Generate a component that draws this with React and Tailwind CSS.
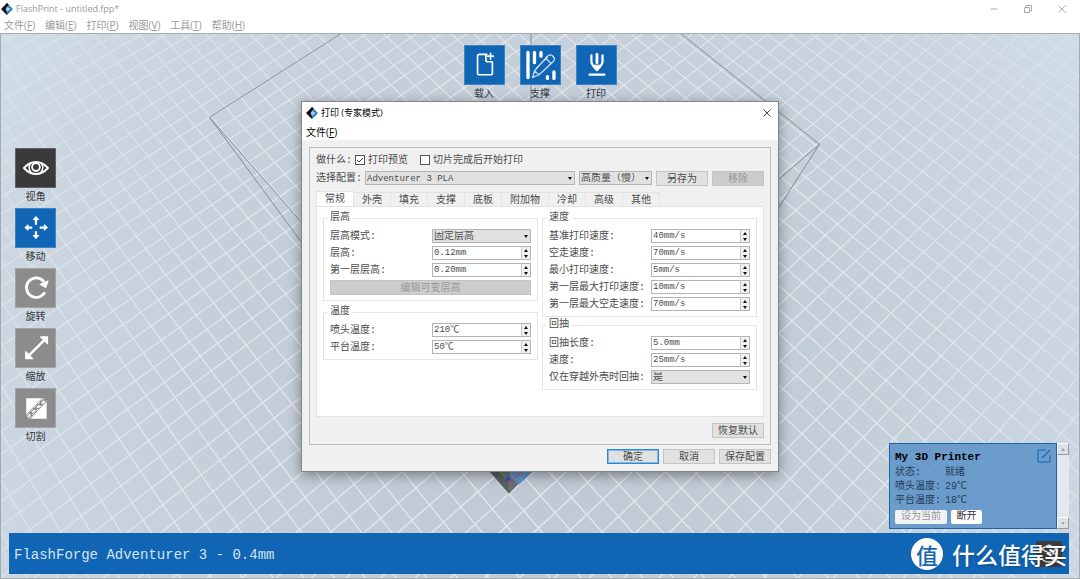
import { useState } from 'react'

// vanishing points of the two floor directions, seen from the current camera
const VP_A = { x: -1093, y: -1380 }
const VP_B = { x: 2653, y: -1433 }
const ORIGIN = { x: 509, y: 494 }
const STEP_A = 22 / 2433
const STEP_B = 22 / 2818

const SANS = "font-['Open_Sans','Noto_Sans_CJK_SC',sans-serif]"
const CJK = "font-['Liberation_Mono','Noto_Sans_CJK_SC',monospace]"

function gridLines(along, across, step, from, to) {
  const lines = []
  for (let i = from; i <= to; i++) {
    const w = 1 + i * step
    if (w <= 0.02) continue
    const px = (ORIGIN.x + i * step * across.x) / w
    const py = (ORIGIN.y + i * step * across.y) / w
    lines.push({
      x1: along.x,
      y1: along.y,
      x2: along.x + (px - along.x) * 4,
      y2: along.y + (py - along.y) * 4,
    })
  }
  return lines
}

const FLOOR = [
  ...gridLines(VP_A, VP_B, STEP_B, -40, 90),
  ...gridLines(VP_B, VP_A, STEP_A, -40, 90),
]

function Scene() {
  return (
    <svg
      className="absolute inset-0 h-full w-full"
      viewBox="0 33 1080 546"
      preserveAspectRatio="xMidYMid slice"
      aria-hidden="true"
    >
      <defs>
        <radialGradient id="floor" gradientUnits="userSpaceOnUse" cx="540" cy="400" r="680">
          <stop offset="0" stopColor="#bfc7d2" />
          <stop offset="0.45" stopColor="#c4ced8" />
          <stop offset="0.8" stopColor="#ccd6e0" />
          <stop offset="1" stopColor="#d0dfe8" />
        </radialGradient>
        <radialGradient id="fade" gradientUnits="userSpaceOnUse" cx="540" cy="480" r="760">
          <stop offset="0" stopColor="#fff" />
          <stop offset="0.5" stopColor="#ddd" />
          <stop offset="1" stopColor="#333" />
        </radialGradient>
        <mask id="fog" maskUnits="userSpaceOnUse" x="0" y="33" width="1080" height="546">
          <rect x="0" y="33" width="1080" height="546" fill="url(#fade)" />
        </mask>
      </defs>
      <rect x="0" y="33" width="1080" height="546" fill="url(#floor)" />
      <g mask="url(#fog)" stroke="#eceff3" strokeWidth="1.2" opacity="0.9">
        {FLOOR.map((l, i) => (
          <line key={i} {...l} />
        ))}
      </g>
      <path d="M470 450 L509 494 L552 450 Z" fill="#6a6f74" />
      <path d="M510 450 H556 L519 485 L510 477 Z" fill="#5f92c8" />
      <path d="M490 472 L509 494 L508 482 L499 472 Z" fill="#5a5f63" />
      <path d="M500 472 L507 479" stroke="#2fc02f" />
      <path d="M522 472 L509 483" stroke="#e03c50" />
      <path d="M506 477 l4 4 m0 -4 l-4 4" stroke="#2f4be0" strokeWidth="1.5" />
      <g stroke="#858c95" strokeWidth="1" fill="none">
        <path d="M341 33 L209 117 L485 432 L820 144 L681 33" />
        <path d="M209 117 L395 370 M820 144 L690 346" />
        <path d="M531 33 V110" />
      </g>
    </svg>
  )
}

function Logo() {
  return (
    <svg viewBox="0 0 12 12" className="size-3 shrink-0" aria-hidden="true">
      <path d="M6 0 L0 6 L6 12 L7 10 L4 7 L7 4 Z" fill="#111" />
      <path d="M6 0 L12 6 L6 12 V8 L8 6 L6 4 Z" fill="#2b7fc0" />
      <path d="M6 0 L8 2 L4 6 L6 8 L4 10 L2.5 7 Z" fill="#111" />
      <path d="M8 2.5 L5 5 V7 H7 L5.5 9.5 L9 6.500 V5 H7 Z" fill="#9fd0ee" />
    </svg>
  )
}

const ICONS = {
  load: (
    <g fill="none" stroke="#fff" strokeWidth="1.8" strokeLinejoin="round" strokeLinecap="round">
      <path d="M23 9 H15 a2 2 0 0 0 -2 2 V29 a2 2 0 0 0 2 2 H27 a2 2 0 0 0 2 -2 V18" />
      <path d="M22 9 V15 a2 2 0 0 0 2 2 H29" />
      <path d="M27 8 V14 M24 11 H30" />
    </g>
  ),
  support: (
    <g fill="none" stroke="#fff" strokeLinecap="round" strokeLinejoin="round">
      <path d="M7 7 V34 M14 7 V18 M21 7 V11 M28 33 V35 M35 28 V35" strokeWidth="3.6" />
      <path
        d="M12 34 L14 27 L28 11 q3 -3 6 0 q3 3 0 6 L19 31 Z M14 27 L19 31 M26 13 L32 19 M16 24 L28 12"
        stroke="#cfe0f2"
        strokeWidth="1.4"
      />
    </g>
  ),
  print: (
    <g fill="none" stroke="#fff" strokeWidth="2.4" strokeLinejoin="round" strokeLinecap="round">
      <path d="M15 10 V17 q0 3 6 9 q6 -6 6 -9 V10" />
      <path d="M21 9 V18" strokeWidth="3" />
      <path d="M18 21 L21 25 L24 21 Z" fill="#fff" strokeWidth="1" />
      <path d="M13 31 H29" />
    </g>
  ),
  view: (
    <g fill="none" stroke="#fff" strokeWidth="2">
      <path d="M8 20.5 Q14 14 21 14 Q28 14 34 20.5 Q28 27 21 27 Q14 27 8 20.5 Z" strokeLinejoin="round" />
      <circle cx="21" cy="19.5" r="4.2" />
      <path d="M15 16 Q12 20 15.5 25 M27 16 Q30 20 26.5 25" strokeWidth="1.6" />
      <path d="M18.5 17 a3 3 0 0 1 3 -1.5" strokeWidth="1" />
    </g>
  ),
  move: (
    <g fill="#fff" stroke="#fff" strokeWidth="2.4">
      <path d="M21 17 V11 M21 24 V30 M17 20 H12 M25 20 H31" />
      <path
        d="M21 8 L24 11.5 H18 Z M21 32 L24 28.5 H18 Z M9 20 L12.5 17 V23 Z M33.5 20 L30 17 V23 Z"
        strokeWidth="1"
        strokeLinejoin="round"
      />
    </g>
  ),
  rotate: (
    <g fill="none" stroke="#fff" strokeWidth="3" strokeLinecap="round">
      <path d="M30 26 A10.5 10.5 0 1 1 29 13" />
      <path d="M34 13 L31.5 20 L25.5 16.5 Z" fill="#fff" strokeWidth="1.2" strokeLinejoin="round" />
    </g>
  ),
  scale: (
    <g fill="#fff" stroke="#fff" strokeLinejoin="round">
      <path d="M14 28 L30 12" strokeWidth="2.6" />
      <path d="M26 8.5 H33.5 V16 Z M10 24.5 V32 H17.5 Z" strokeWidth="1.2" />
    </g>
  ),
  cut: (
    <g fill="#fff">
      <path d="M10.500 10 H29 L10.500 28 Z M32.500 13 V32 H15 Z" />
      <path d="M11 31 L33 9" stroke="#8c8c8c" strokeWidth="6" />
      <path d="M11 28 L30 9.500 M13 32 L33 12" stroke="#fff" strokeWidth="1" strokeDasharray="4 1.500" />
      <path d="M12 30 L32 11" stroke="#fff" strokeWidth="1.800" strokeDasharray="4 3" />
    </g>
  ),
}

function Tool({ icon, label, tone }) {
  return (
    <button className="flex w-[41px] flex-col items-center">
      <span className={`block h-10 w-full border border-white/20 ${tone}`}>
        <svg viewBox="0 0 41 41" className="size-full" aria-hidden="true">
          {ICONS[icon]}
        </svg>
      </span>
      <span className="mt-[3px] text-[10px] leading-[14px] text-[#333a40]">{label}</span>
    </button>
  )
}

function Menu({ items, className }) {
  return (
    <nav className={`flex gap-[10px] text-[10px] leading-[16px] ${SANS} ${className}`}>
      {items.map(([name, key]) => (
        <button key={name}>
          {name}(<u>{key}</u>)
        </button>
      ))}
    </nav>
  )
}

function Arrow({ up, color = '#111' }) {
  return (
    <svg viewBox="0 0 4 3" className="h-[3px] w-1" aria-hidden="true">
      <path d={up ? 'M0 3 L2 0 L4 3 Z' : 'M0 0 L4 0 L2 3 Z'} fill={color} />
    </svg>
  )
}

function Select({ id, label, options, className }) {
  return (
    <span className={`relative block ${className}`}>
      <select
        id={id}
        aria-label={label}
        className="block h-[14px] w-full appearance-none border border-[#b4b4b4] bg-[#e1e1e1] pt-px pl-px leading-[12px]"
      >
        {options.map((o) => (
          <option key={o}>{o}</option>
        ))}
      </select>
      <span className="pointer-events-none absolute inset-y-0 right-[3px] flex items-center">
        <Arrow />
      </span>
    </span>
  )
}

function Spin({ id, initial }) {
  const [value, setValue] = useState(initial)
  const bump = (d) =>
    setValue((v) =>
      v.replace(/^[\d.]+/, (n) => {
        const digits = (n.split('.')[1] || '').length
        return (Number(n) + d / 10 ** digits).toFixed(digits)
      }),
    )

  return (
    <span className="flex h-[14px] w-[99px] border border-[#b4b4b4] bg-white">
      <input
        id={id}
        value={value}
        onChange={(e) => setValue(e.target.value)}
        className="min-w-0 flex-1 pt-px pl-px text-[9px] leading-[11px] outline-none"
      />
      <span className="flex w-[9px] flex-col border-l border-[#c8c8c8] bg-[#f0f0f0]">
        <button aria-label="增加" className="flex flex-1 items-center justify-center" onClick={() => bump(1)}>
          <Arrow up />
        </button>
        <button aria-label="减少" className="flex flex-1 items-center justify-center" onClick={() => bump(-1)}>
          <Arrow />
        </button>
      </span>
    </span>
  )
}

function Row({ id, label, children }) {
  return (
    <div className="flex h-[14px] items-center justify-between">
      <label htmlFor={id}>{label}:</label>
      {children}
    </div>
  )
}

function Group({ title, children }) {
  return (
    <fieldset className="border border-[#e4e4e4] px-[6px] pb-[5px]">
      <legend className="-ml-[3px] px-[3px] leading-[12px]">{title}</legend>
      <div className="flex flex-col gap-[3px] pt-[5px]">{children}</div>
    </fieldset>
  )
}

function DialogButton({ children, primary, disabled, className = 'w-[52px]' }) {
  let look = 'border-[#c4c4c4] bg-[#e1e1e1]'
  if (primary) look = 'border-[#2a8ad8] bg-[#e1e1e1] shadow-[inset_0_0_0_1px_#7fb8e6]'
  if (disabled) look = 'border-[#c4c4c4] bg-[#cccccc] text-[#999999]'
  return (
    <button disabled={disabled} className={`h-[15px] shrink-0 border leading-[15px] ${look} ${className}`}>
      {children}
    </button>
  )
}

const SPEEDS = [
  ['base', '基准打印速度', '40mm/s'],
  ['travel', '空走速度', '70mm/s'],
  ['min', '最小打印速度', '5mm/s'],
  ['firstPrint', '第一层最大打印速度', '10mm/s'],
  ['firstTravel', '第一层最大空走速度', '70mm/s'],
]

function GeneralTab() {
  return (
    <div className="grid grid-cols-2 items-start gap-x-1 border border-[#e2e2e2] bg-white px-[6px] pt-[5px] pb-[26px]">
      <div className="flex flex-col gap-[5px]">
        <Group title="层高">
          <Row id="mode" label="层高模式">
            <Select id="mode" options={['固定层高', '可变层高']} className="w-[99px]" />
          </Row>
          <Row id="height" label="层高">
            <Spin id="height" initial="0.12mm" />
          </Row>
          <Row id="first" label="第一层层高">
            <Spin id="first" initial="0.20mm" />
          </Row>
          <DialogButton disabled className="w-full">
            编辑可变层高
          </DialogButton>
        </Group>
        <Group title="温度">
          <Row id="nozzle" label="喷头温度">
            <Spin id="nozzle" initial="210℃" />
          </Row>
          <Row id="bed" label="平台温度">
            <Spin id="bed" initial="50℃" />
          </Row>
        </Group>
      </div>
      <div className="flex flex-col gap-[2px]">
        <Group title="速度">
          {SPEEDS.map(([id, label, value]) => (
            <Row key={id} id={id} label={label}>
              <Spin id={id} initial={value} />
            </Row>
          ))}
        </Group>
        <Group title="回抽">
          <Row id="retract" label="回抽长度">
            <Spin id="retract" initial="5.0mm" />
          </Row>
          <Row id="retractSpeed" label="速度">
            <Spin id="retractSpeed" initial="25mm/s" />
          </Row>
          <Row id="crossing" label="仅在穿越外壳时回抽">
            <Select id="crossing" options={['是', '否']} className="w-[99px]" />
          </Row>
        </Group>
      </div>
    </div>
  )
}

const TABS = ['常规', '外壳', '填充', '支撑', '底板', '附加物', '冷却', '高级', '其他']

function Check({ label, initial }) {
  const [on, setOn] = useState(initial)
  return (
    <label className="flex items-center gap-[3px]">
      <span className="relative flex">
        <input
          type="checkbox"
          checked={on}
          onChange={(e) => setOn(e.target.checked)}
          className="size-[10px] appearance-none border border-[#555] bg-white"
        />
        {on && (
          <svg viewBox="0 0 10 10" className="pointer-events-none absolute inset-0" aria-hidden="true">
            <path d="M2 5 L4 7 L8 3" fill="none" stroke="#333" strokeWidth="1" />
          </svg>
        )}
      </span>
      {label}
    </label>
  )
}

function PrintDialog() {
  const [tab, setTab] = useState('常规')

  return (
    <section
      role="dialog"
      aria-label="打印 (专家模式)"
      className="pointer-events-auto w-[478px] border border-[#80868c] bg-[#f0f0f0] text-[10px] text-[#4c4c4c] shadow-[0_3px_12px_rgba(0,0,0,0.4)]"
    >
      <div className="bg-white text-black">
        <div className={`flex h-[21px] items-center gap-[3px] px-1 text-[9px] ${SANS}`}>
          <Logo />
          <h2 className="flex-1">打印 (专家模式)</h2>
          <button aria-label="关闭" className="mr-[3px]">
            <svg viewBox="0 0 8 8" className="size-2" aria-hidden="true">
              <path d="M0.500 0.500 L7.500 7.500 M7.500 0.500 L0.500 7.500" stroke="#333" strokeWidth="0.900" />
            </svg>
          </button>
        </div>
        <Menu items={[['文件', 'F']]} className="h-[17px] pl-1" />
      </div>
      <div className="px-[7px] pt-[7px] pb-[7px]">
        <div className="border border-[#b9bbc0] px-[6px] pt-[5px] pb-[6px]">
          <div className="flex h-[14px] items-center">
            <span className="w-[39px] whitespace-nowrap">做什么:</span>
            <Check label="打印预览" initial={true} />
            <span className="w-3" />
            <Check label="切片完成后开始打印" initial={false} />
          </div>
          <div className="mt-1 flex h-[14px] items-center gap-1">
            <label htmlFor="profile" className="-mr-1 w-[49px] shrink-0 whitespace-nowrap">
              选择配置:
            </label>
            <Select id="profile" options={['Adventurer 3 PLA']} className="flex-1 text-[9px]" />
            <Select label="质量" options={['高质量（慢）', '标准']} className="w-[73px]" />
            <DialogButton>另存为</DialogButton>
            <DialogButton disabled>移除</DialogButton>
          </div>
          <div role="tablist" className="mt-[6px] flex h-[15px] items-end">
            {TABS.map((t) => (
              <button
                key={t}
                role="tab"
                aria-selected={t === tab}
                onClick={() => setTab(t)}
                className={`border border-b-0 border-[#e2e2e2] px-2 leading-[15px] ${
                  t === tab ? 'h-[15px] bg-white' : 'h-[14px] border-l-0'
                }`}
              >
                {t}
              </button>
            ))}
          </div>
          <GeneralTab />
          <div className="mt-[6px] flex justify-end">
            <DialogButton>恢复默认</DialogButton>
          </div>
        </div>
        <div className="mt-1 flex justify-end gap-1">
          <DialogButton primary>确定</DialogButton>
          <DialogButton>取消</DialogButton>
          <DialogButton>保存配置</DialogButton>
        </div>
      </div>
    </section>
  )
}

function ScrollBar() {
  return (
    <div className="flex w-3 flex-col justify-between bg-[#e4e8ec]">
      {[true, false].map((up) => (
        <button
          key={String(up)}
          aria-label={up ? '向上' : '向下'}
          className="flex h-3 items-center justify-center border border-t-white border-r-[#999] border-b-[#999] border-l-white bg-[#dde1e5]"
        >
          <Arrow up={up} color="#a0a4a8" />
        </button>
      ))}
    </div>
  )
}

function PrinterCard() {
  return (
    <div className="flex">
      <section className="w-[168px] border border-[#1465b4] bg-[#5a92c8]/85 px-[5px] pt-[5px] pb-1 text-[10px] text-[#233c55]">
        <div className="flex items-start justify-between">
          <h2 className="text-[11px] leading-[17px] font-bold text-black">My 3D Printer</h2>
          <button aria-label="编辑">
            <svg viewBox="0 0 14 14" className="size-[14px]" fill="none" stroke="#1465b4" aria-hidden="true">
              <path d="M9 1 H1 V13 H13 V6" />
              <path d="M5 9 L13 1" strokeWidth="1.300" />
            </svg>
          </button>
        </div>
        <dl className="grid grid-cols-[50px_1fr] leading-[14px]">
          <dt>状态:</dt>
          <dd>就绪</dd>
          <dt>喷头温度:</dt>
          <dd>29℃</dd>
          <dt>平台温度:</dt>
          <dd>18℃</dd>
        </dl>
        <div className="mt-[2px] flex gap-1 leading-[14px]">
          <button disabled className="w-[52px] rounded-xs bg-[#f0f2f4] text-[#999]">
            设为当前
          </button>
          <button className="w-[31px] rounded-xs bg-white text-[#333]">断开</button>
        </div>
      </section>
      <ScrollBar />
    </div>
  )
}

function Watermark() {
  return (
    <div className="relative flex items-center gap-[9px] font-['Noto_Sans_CJK_SC',sans-serif]">
      <svg viewBox="0 0 26 26" className="absolute right-[5px] size-[26px]" aria-hidden="true">
        <rect width="26" height="26" rx="2" fill="#3c3c3c" />
        <path
          d="M5 8 L13 4 L21 8 L13 12 Z M5 18 Q13 24 21 18 M16 13 a3 3 0 1 1 -1 4"
          fill="none"
          stroke="#ddd"
          strokeWidth="1.500"
        />
      </svg>
      <span className="relative flex size-8 items-center justify-center rounded-full bg-white text-[22px] leading-none font-medium text-[#1465b4] shadow-sm">
        值
      </span>
      <span className="relative text-[23px] leading-8 font-medium text-white text-shadow-md">什么值得买</span>
    </div>
  )
}

export default function App() {
  return (
    <div className={`flex min-h-screen flex-col bg-white ${CJK}`}>
      <header className="text-[#999]">
        <div className={`flex h-[17px] items-center gap-[3px] pl-px text-[9px] ${SANS}`}>
          <Logo />
          <h1 className="flex-1">FlashPrint - untitled.fpp*</h1>
          <div className="flex items-center gap-[26px] pr-[14px]">
            <button aria-label="最小化">
              <svg viewBox="0 0 8 8" className="size-2" stroke="#aaa" aria-hidden="true">
                <path d="M0.500 4 H7.500" />
              </svg>
            </button>
            <button aria-label="还原">
              <svg viewBox="0 0 8 8" className="size-2" fill="none" stroke="#aaa" aria-hidden="true">
                <path d="M0.500 2.500 H5.500 V7.500 H0.500 Z M2 2 V0.500 H7.500 V6 H6" />
              </svg>
            </button>
            <button aria-label="关闭">
              <svg viewBox="0 0 8 8" className="size-2" stroke="#aaa" aria-hidden="true">
                <path d="M0.500 0.500 L7.500 7.500 M7.500 0.500 L0.500 7.500" />
              </svg>
            </button>
          </div>
        </div>
        <Menu
          items={[['文件', 'F'], ['编辑', 'E'], ['打印', 'P'], ['视图', 'V'], ['工具', 'T'], ['帮助', 'H']]}
          className="h-4 pl-1"
        />
      </header>

      <main className="relative flex flex-1 flex-col border border-[#a3abb5]">
        <Scene />

        <div className="relative flex justify-center gap-[15px] pt-[11px]">
          <Tool icon="load" label="载入" tone="bg-[#1065b5]" />
          <Tool icon="support" label="支撑" tone="bg-[#1065b5]" />
          <Tool icon="print" label="打印" tone="bg-[#1065b5]" />
        </div>

        <div className="relative flex flex-1 items-start justify-between pr-[10px] pl-[14px]">
          <div className="flex flex-col gap-[3px] pt-[46px]">
            <Tool icon="view" label="视角" tone="bg-[#3a3a3a]" />
            <Tool icon="move" label="移动" tone="bg-[#1065b5]" />
            <Tool icon="rotate" label="旋转" tone="bg-[#8c8c8c]" />
            <Tool icon="scale" label="缩放" tone="bg-[#8c8c8c]" />
            <Tool icon="cut" label="切割" tone="bg-[#8c8c8c]" />
          </div>
          <div className="self-end">
            <PrinterCard />
          </div>
        </div>

        <footer className="relative mt-1 mr-[10px] mb-1 ml-2 flex h-[41px] items-center justify-between bg-[#1065b5] pr-[2px] pl-[5px]">
          <p className="pt-[3px] text-[14px] text-[#d5e4f3]">FlashForge Adventurer 3 - 0.4mm</p>
          <Watermark />
        </footer>

        <div className="pointer-events-none absolute inset-x-0 top-[67px] flex justify-center">
          <PrintDialog />
        </div>
      </main>
    </div>
  )
}
